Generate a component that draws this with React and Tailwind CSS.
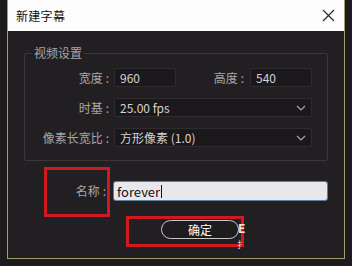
import React from "react";

const font = { fontFamily: '"Noto Sans CJK SC", "Noto Sans", sans-serif' };

function Chevron() {
  return (
    <svg width="10" height="6" viewBox="0 0 10 6" className="shrink-0">
      <path d="M1 1 L5 5 L9 1" fill="none" stroke="#a9a6a9" strokeWidth="1.2" />
    </svg>
  );
}

function Label({ children }) {
  return (
    <div className="text-right text-[12px] leading-none text-[#a9a6a9] whitespace-nowrap pr-[1px]">
      {children}
      <span className="ml-[3px]">:</span>
    </div>
  );
}

export default function App() {
  return (
    <div className="w-[352px] h-[266px] bg-[#1c1a1c] overflow-hidden relative" style={font}>
      <div className="ml-[7px] w-[338px] h-[259px] border-x border-b border-[#a49d6e] bg-[#221f22] flex flex-col">
        {/* Title bar */}
        <div className="h-[31px] bg-[#fdfdfd] flex items-center justify-between pl-[8px] pr-[9px] shrink-0">
          <span className="text-[12px] text-[#111] leading-none tracking-[0.3px]">新建字幕</span>
          <svg width="13" height="13" viewBox="0 0 13 13">
            <path d="M1 1 L12 12 M12 1 L1 12" stroke="#222" strokeWidth="1.1" />
          </svg>
        </div>

        {/* Body */}
        <div className="flex flex-col px-[16px] pt-[15px]">
          <fieldset className="border border-[#3a373a] rounded-[2px] pr-[15px] pb-[13px] pt-[8px] m-0">
            <legend className="ml-[7px] px-[2px] text-[12px] leading-[14px] text-[#a9a6a9]">视频设置</legend>
            <div className="grid grid-cols-[85px_1fr] gap-x-[4px] gap-y-[11px] items-center">
              <Label>宽度</Label>
              <div className="flex items-center">
                <div className="w-[62px] h-[19px] bg-[#1a181a] border border-[#2f2c2f] rounded-[2px] flex items-center px-[5px] text-[12px] text-[#d6d3d6]">960</div>
                <div className="flex-1 text-right pr-[6px] text-[12px] text-[#a9a6a9] leading-none">
                  高度<span className="ml-[3px]">:</span>
                </div>
                <div className="w-[62px] h-[19px] bg-[#1a181a] border border-[#2f2c2f] rounded-[2px] flex items-center px-[5px] text-[12px] text-[#d6d3d6]">540</div>
              </div>

              <Label>时基</Label>
              <div className="h-[19px] bg-[#1a181a] border border-[#2f2c2f] rounded-[2px] flex items-center justify-between pl-[5px] pr-[5px] text-[12px] text-[#d6d3d6]">
                <span>25.00 fps</span>
                <Chevron />
              </div>

              <Label>像素长宽比</Label>
              <div className="h-[19px] bg-[#1a181a] border border-[#2f2c2f] rounded-[2px] flex items-center justify-between pl-[5px] pr-[5px] text-[12px] text-[#d6d3d6]">
                <span>方形像素 (1.0)</span>
                <Chevron />
              </div>
            </div>
          </fieldset>

          {/* Name row */}
          <div className="grid grid-cols-[83px_1fr] gap-x-[6px] items-center mt-[20px]">
            <Label>名称</Label>
            <div className="h-[20px] bg-[#e8e8ec] border border-[#5d7fa3] rounded-[3px] flex items-center px-[3px] text-[13px] text-[#111] leading-none">
              <span>forever</span>
              <span className="w-[1px] h-[13px] bg-[#111] ml-[1px]" />
            </div>
          </div>

          {/* Button row */}
          <div className="mt-[19px] pl-[137px]">
            <div className="w-[78px] h-[19px] rounded-full border border-[#c9c6c9] bg-[#1f1c1f] flex items-center justify-center text-[12px] text-white leading-none">确定</div>
          </div>
        </div>
      </div>

      {/* Red annotation boxes */}
      <div className="absolute left-[44px] top-[167px] w-[66px] h-[50px] border-[3px] border-[#cf1a20]" />
      <div className="absolute left-[126px] top-[216px] w-[118px] h-[31px] border-[3px] border-[#cf1a20]" />
      <div className="absolute left-[238px] top-[222px] text-[12px] leading-none text-[#f0e8e8] font-bold">E</div>
      <div className="absolute left-[237px] top-[240px] text-[9px] leading-none text-[#d8d0d0]">扌</div>
    </div>
  );
}
